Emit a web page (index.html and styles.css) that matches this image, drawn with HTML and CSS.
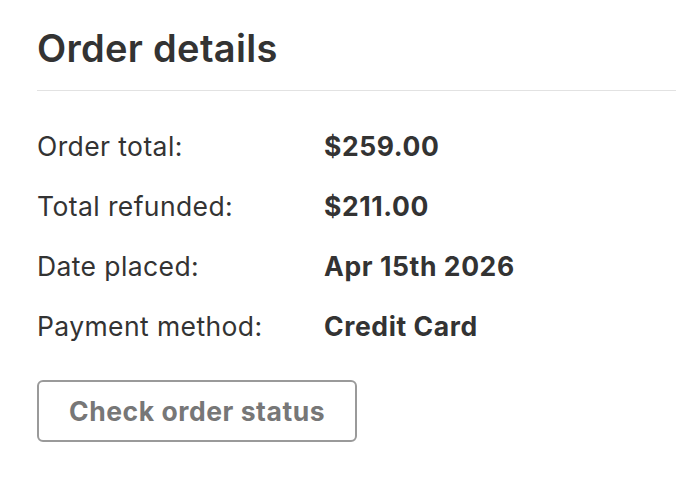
FILE: index.html
```html
<!DOCTYPE html>
<html lang="en">
<head>
<meta charset="utf-8">
<title>Order details</title>
<link rel="stylesheet" href="styles.css">
</head>
<body>
<section class="order">
  <h1 class="order-title">Order details</h1>
  <dl class="order-list">
    <div class="order-row"><dt>Order total:</dt><dd>$259.00</dd></div>
    <div class="order-row"><dt>Total refunded:</dt><dd>$211.00</dd></div>
    <div class="order-row"><dt>Date placed:</dt><dd>Apr 15th 2026</dd></div>
    <div class="order-row"><dt>Payment method:</dt><dd>Credit Card</dd></div>
  </dl>
  <button class="order-button" type="button">Check order status</button>
</section>
</body>
</html>
```
FILE: styles.css
```css
html, body {
  margin: 0;
  padding: 0;
  background: #fff;
}

body {
  font-family: Inter, "Noto Sans", "Liberation Sans", sans-serif;
  color: #333;
}

.order {
  padding: 26px 0 0 37px;
}

.order-title {
  margin: 0;
  font-size: 38px;
  line-height: 44px;
  font-weight: 600;
  letter-spacing: 0.3px;
  color: #333;
  padding-bottom: 20px;
  border-bottom: 1px solid #e2e2e2;
}

.order-list {
  margin: 25px 0 0;
  padding: 0;
}

.order-row {
  display: grid;
  grid-template-columns: 287px 1fr;
  font-size: 26.5px;
  line-height: 60px;
}

.order-row dt {
  font-weight: 400;
  letter-spacing: 0.4px;
}

.order-row dd {
  margin: 0;
  font-weight: 700;
  letter-spacing: 0.6px;
}

.order-button {
  margin-top: 24px;
  font-family: inherit;
  font-size: 26.5px;
  font-weight: 700;
  line-height: 32px;
  letter-spacing: 0.55px;
  color: #777;
  background: #fff;
  border: 2px solid #9a9a9a;
  border-radius: 6px;
  padding: 13px 30px;
  cursor: pointer;
}
```
